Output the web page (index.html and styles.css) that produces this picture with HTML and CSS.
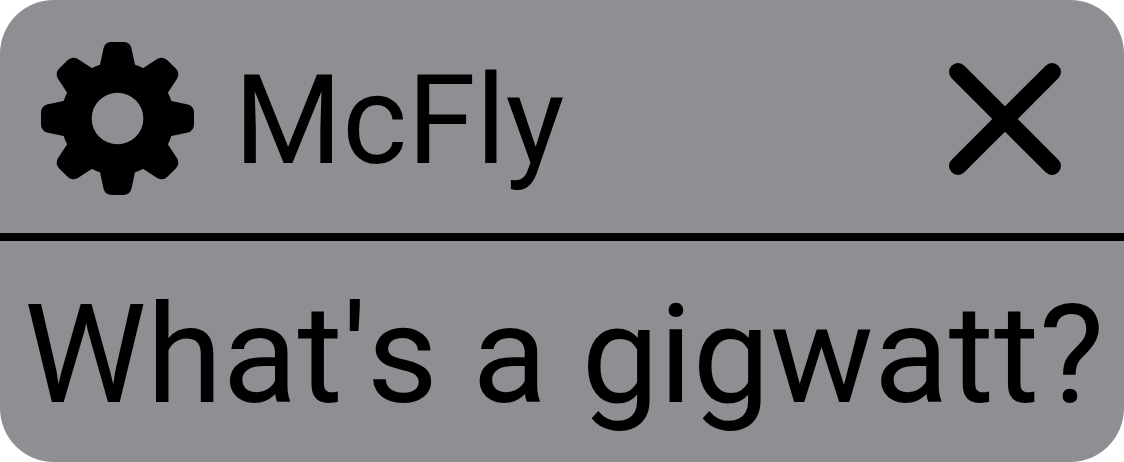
FILE: index.html
```html
<!DOCTYPE html>
<html lang="en">
<head>
<meta charset="utf-8">
<meta name="viewport" content="width=device-width, initial-scale=1">
<title>McFly</title>
<link rel="stylesheet" href="styles.css">
</head>
<body>
<main class="card">
  <header class="card-header">
    <svg class="gear" viewBox="0 0 154 154" aria-hidden="true">
      <defs><path id="tooth" d="M59 25L63 6Q65 0 71 0H83Q89 0 91 6L95 25Z"/></defs>
      <path fill-rule="evenodd" d="M77 20a57 57 0 1 0 0 114a57 57 0 1 0 0-114ZM77 51a26 26 0 1 1 0 52a26 26 0 1 1 0-52Z"/>
      <use href="#tooth"/>
      <use href="#tooth" transform="rotate(45 77 77)"/>
      <use href="#tooth" transform="rotate(90 77 77)"/>
      <use href="#tooth" transform="rotate(135 77 77)"/>
      <use href="#tooth" transform="rotate(180 77 77)"/>
      <use href="#tooth" transform="rotate(225 77 77)"/>
      <use href="#tooth" transform="rotate(270 77 77)"/>
      <use href="#tooth" transform="rotate(315 77 77)"/>
    </svg>
    <h1 class="title">McFly</h1>
    <button class="close" type="button" aria-label="Close">
      <svg class="cross" viewBox="0 0 114 114" aria-hidden="true"><path d="M10 10L104 104M104 10L10 104"/></svg>
    </button>
  </header>
  <p class="message">What's a gigwatt?</p>
</main>
</body>
</html>
```

FILE: styles.css
```css
body {
  margin: 0;
  background: #fff;
  color: #000;
  font-family: Roboto, sans-serif;
}

.card {
  background: #8e8e93;
  border-radius: 54px;
  overflow: hidden;
}

.card-header {
  display: flex;
  align-items: center;
  padding: 42px 62px 38px 41px;
  border-bottom: 8px solid #000;
}

.gear {
  width: 153px;
  height: 153px;
  flex: none;
}

.title {
  margin: 0 auto 0 40px;
  padding-top: 4px;
  font-size: 124px;
  font-weight: 400;
  line-height: 148px;
}

.close {
  display: flex;
  padding: 0;
  border: 0;
  background: none;
  cursor: pointer;
}

.cross {
  width: 114px;
  height: 114px;
  fill: none;
  stroke: #000;
  stroke-width: 18px;
  stroke-linecap: round;
}

.message {
  margin: 0;
  padding: 34px 24px 27px;
  font-size: 138px;
  font-kerning: none;
  line-height: 160px;
  text-align: center;
  white-space: nowrap;
}
```
